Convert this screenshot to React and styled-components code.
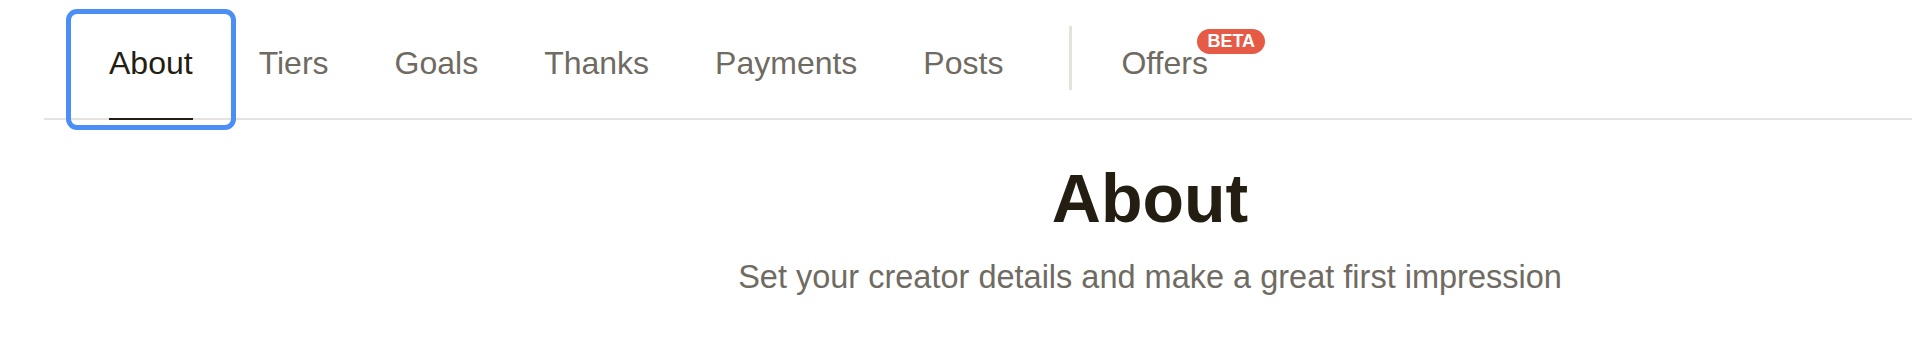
import React, { useState } from "react";
import styled, { createGlobalStyle } from "styled-components";

const GlobalStyle = createGlobalStyle`
  html, body {
    margin: 0;
    padding: 0;
    background: #ffffff;
  }
  body {
    font-family: "Liberation Sans", Arial, sans-serif;
    color: #241e12;
  }
`;

const Page = styled.div`
  width: 100%;
  min-height: 346px;
  background: #ffffff;
`;

const NavWrap = styled.div`
  padding-left: 44px;
`;

const Nav = styled.nav`
  display: flex;
  align-items: flex-start;
  padding: 19px 0 0 32px;
  border-bottom: 2px solid #e5e3dd;
`;

const Tab = styled.button`
  position: relative;
  display: block;
  margin: 0 0 -2px;
  padding: 24px 33px 0;
  border: none;
  background: none;
  cursor: pointer;
  font-family: "Liberation Sans", Arial, sans-serif;
  font-size: 32px;
  line-height: 40px;
  color: ${(p) => (p.$active ? "#241e12" : "#6f6b63")};
  outline: ${(p) => (p.$focused ? "5px solid #4b8ff6" : "none")};
  outline-offset: 5px;
  border-radius: 1px;
`;

const Label = styled.span`
  position: relative;
  display: block;
  padding-bottom: 35px;
  border-bottom: 2px solid ${(p) => (p.$active ? "#241e12" : "transparent")};
`;

const Divider = styled.span`
  display: block;
  width: 3px;
  height: 64px;
  margin: 7px 16px 0 33px;
  background: #e5e2dc;
`;

const Badge = styled.span`
  position: absolute;
  left: 76px;
  top: -14px;
  padding: 0 10px;
  height: 25px;
  border-radius: 13px;
  background: #e65b45;
  color: #ffffff;
  font-size: 18px;
  font-weight: 700;
  line-height: 25px;
  white-space: nowrap;
`;

const Content = styled.section`
  padding-left: 388px;
  text-align: center;
`;

const Title = styled.h1`
  margin: 38px 0 0;
  font-size: 68px;
  line-height: 80px;
  font-weight: 700;
  color: #241e12;
`;

const Subtitle = styled.p`
  margin: 19px 0 0;
  font-size: 32.5px;
  line-height: 40px;
  color: #6f6b63;
`;

const tabs = ["About", "Tiers", "Goals", "Thanks", "Payments", "Posts"];

export default function App() {
  const [active, setActive] = useState("About");

  return (
    <>
      <GlobalStyle />
      <Page>
        <NavWrap>
          <Nav>
            {tabs.map((t) => (
              <Tab
                key={t}
                $active={active === t}
                $focused={t === "About"}
                onClick={() => setActive(t)}
              >
                <Label $active={active === t}>{t}</Label>
              </Tab>
            ))}
            <Divider />
            <Tab $active={active === "Offers"} onClick={() => setActive("Offers")}>
              <Label $active={active === "Offers"}>
                Offers
                <Badge>BETA</Badge>
              </Label>
            </Tab>
          </Nav>
        </NavWrap>

        <Content>
          <Title>About</Title>
          <Subtitle>Set your creator details and make a great first impression</Subtitle>
        </Content>
      </Page>
    </>
  );
}
